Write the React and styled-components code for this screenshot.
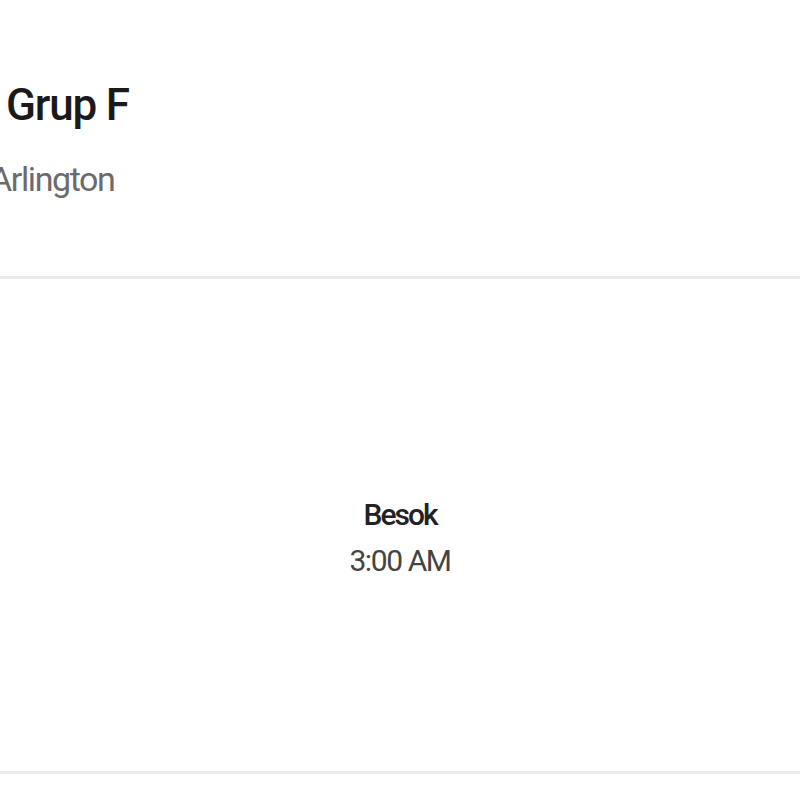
import React from 'react';
import styled, { createGlobalStyle } from 'styled-components';

const GlobalStyle = createGlobalStyle`
  html, body {
    margin: 0;
    padding: 0;
    background: #ffffff;
  }
  body {
    font-family: Roboto, "Open Sans", "Liberation Sans", sans-serif;
    overflow: hidden;
  }
`;

const Page = styled.div`
  width: 800px;
  height: 800px;
  overflow: hidden;
  display: flex;
  flex-direction: column;
`;

const Header = styled.header`
  height: 279px;
  box-sizing: border-box;
  padding-top: 77px;
  border-bottom: 3px solid #ebebeb;
  display: flex;
  flex-direction: column;
`;

const Title = styled.h1`
  margin: 0 0 0 6px;
  font-size: 44px;
  font-weight: 500;
  letter-spacing: -1.2px;
  line-height: 56px;
  color: #1a1a1a;
`;

const Subtitle = styled.div`
  margin: 24px 0 0 -10px;
  font-size: 34px;
  font-weight: 400;
  letter-spacing: -1.4px;
  line-height: 44px;
  color: #6b6b6b;
`;

const Body = styled.section`
  height: 495px;
  box-sizing: border-box;
  border-bottom: 3px solid #ebebeb;
  display: flex;
  flex-direction: column;
  align-items: center;
  justify-content: center;
  padding-top: 26px;
`;

const EventName = styled.div`
  font-size: 30px;
  font-weight: 500;
  letter-spacing: -2px;
  line-height: 42px;
  color: #222222;
`;

const EventTime = styled.div`
  margin-top: 4px;
  font-size: 30px;
  font-weight: 400;
  letter-spacing: -1.4px;
  line-height: 42px;
  color: #444444;
`;

const App = () => {
  return (
    <>
      <GlobalStyle />
      <Page>
        <Header>
          <Title>Grup F</Title>
          <Subtitle>Arlington</Subtitle>
        </Header>
        <Body>
          <EventName>Besok</EventName>
          <EventTime>3:00 AM</EventTime>
        </Body>
      </Page>
    </>
  );
};

export default App;
